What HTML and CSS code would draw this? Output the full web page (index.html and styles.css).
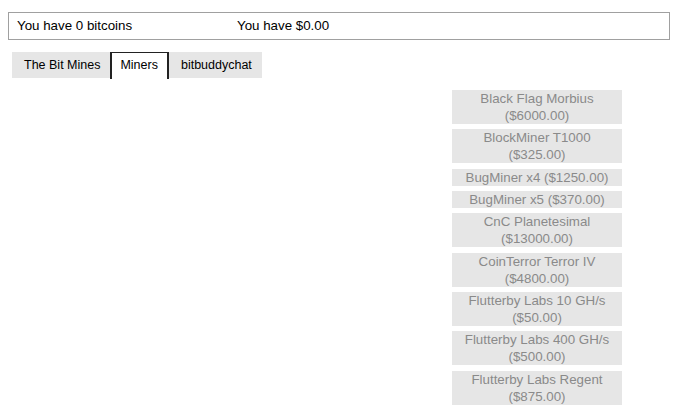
FILE: index.html
```html
<!DOCTYPE html>
<html>
<head>
<meta charset="utf-8">
<link rel="stylesheet" href="styles.css">
</head>
<body>
<div class="status">
  <span class="coins">You have 0 bitcoins</span><span class="cash">You have $0.00</span>
</div>
<div class="tabs">
  <div class="tab">The Bit Mines</div>
  <div class="tab active">Miners</div>
  <div class="tab">bitbuddychat</div>
</div>
<div class="content">
  <div class="miners">
    <div class="miner">Black Flag Morbius<br>($6000.00)</div>
    <div class="miner">BlockMiner T1000<br>($325.00)</div>
    <div class="miner">BugMiner x4 ($1250.00)</div>
    <div class="miner">BugMiner x5 ($370.00)</div>
    <div class="miner">CnC Planetesimal<br>($13000.00)</div>
    <div class="miner">CoinTerror Terror IV<br>($4800.00)</div>
    <div class="miner">Flutterby Labs 10 GH/s<br>($50.00)</div>
    <div class="miner">Flutterby Labs 400 GH/s<br>($500.00)</div>
    <div class="miner">Flutterby Labs Regent<br>($875.00)</div>
  </div>
</div>
</body>
</html>
```
FILE: styles.css
```css
body {
  margin: 8px;
  font-family: "Liberation Sans", Arial, sans-serif;
  font-size: 13.333px;
  color: #000;
  background: #fff;
}
.status {
  margin-top: 4px;
  border: 1px solid #a0a0a0;
  padding: 5px 8px;
  line-height: 16px;
  display: flex;
}
.coins {
  width: 220px;
}
.tabs {
  display: flex;
  margin: 12px 0 0 4px;
  font-size: 12.5px;
}
.tab {
  background: #e6e6e6;
  padding: 0 10px 0 12px;
  line-height: 26px;
  height: 26px;
}
.active {
  background: #fff;
  border: 1px solid #222;
  border-left-width: 2px;
  border-right-width: 2px;
  border-bottom: none;
  padding: 0 9px 0 8px;
  line-height: 25px;
}
.content {
  display: flex;
  justify-content: flex-end;
  margin-top: 11px;
  padding-right: 48px;
}
.miners {
  width: 170px;
  display: flex;
  flex-direction: column;
  gap: 5.35px;
}
.miner {
  background: #e6e6e6;
  color: #8a8a8a;
  text-align: center;
  line-height: 17px;
}
```
